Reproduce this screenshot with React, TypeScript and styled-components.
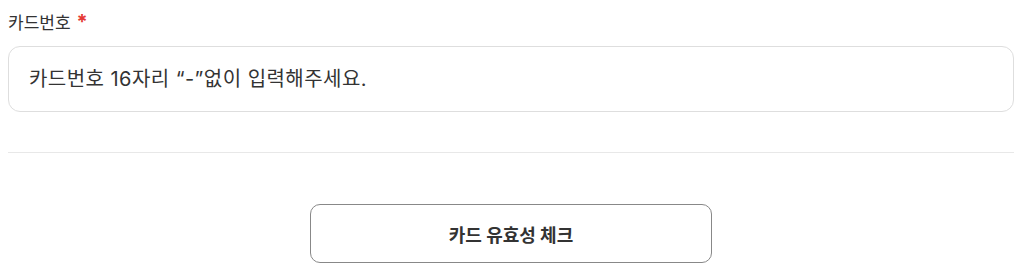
import styled, { createGlobalStyle } from "styled-components";

const GlobalStyle = createGlobalStyle`
  html, body {
    margin: 0;
    padding: 0;
    background: #fff;
  }
  body {
    font-family: "Inter", "Noto Sans CJK KR", sans-serif;
    color: #333;
  }
`;

const Page = styled.div`
  padding: 10px 10px 0 8px;
`;

const Field = styled.div`
  display: flex;
  flex-direction: column;
`;

const Label = styled.label`
  display: block;
  height: 26px;
  font-size: 17px;
  line-height: 26px;
  color: #333;
  margin-bottom: 10px;
`;

const Required = styled.span`
  color: #e53935;
  font-size: 20px;
  line-height: 1;
  font-weight: 700;
  margin-left: 6px;
`;

const Input = styled.input`
  box-sizing: border-box;
  width: 100%;
  height: 66px;
  padding: 0 20px;
  border: 1px solid #dedede;
  border-radius: 12px;
  font-family: inherit;
  font-size: 20px;
  letter-spacing: 0.45px;
  color: #333;
  outline: none;

  &::placeholder {
    color: #333;
  }
`;

const Divider = styled.hr`
  border: none;
  border-top: 1px solid #e8e8e8;
  margin: 40px 0 0;
`;

const Actions = styled.div`
  display: flex;
  justify-content: center;
  padding-top: 51px;
`;

const CheckButton = styled.button`
  width: 402px;
  height: 59px;
  background: #fff;
  border: 1.5px solid #888;
  border-radius: 10px;
  font-family: inherit;
  font-size: 18px;
  font-weight: 700;
  color: #333;
  cursor: pointer;
`;

export default function App() {
  return (
    <>
      <GlobalStyle />
      <Page>
        <Field>
          <Label>
            카드번호<Required>*</Required>
          </Label>
          <Input type="text" placeholder="카드번호 16자리 “-”없이 입력해주세요." />
        </Field>
        <Divider />
        <Actions>
          <CheckButton>카드 유효성 체크</CheckButton>
        </Actions>
      </Page>
    </>
  );
}
